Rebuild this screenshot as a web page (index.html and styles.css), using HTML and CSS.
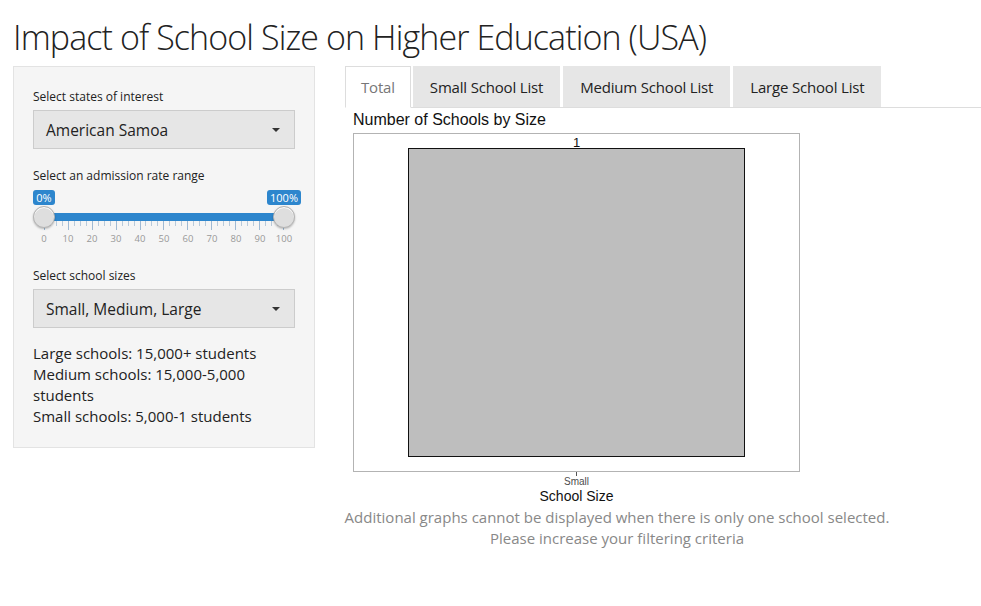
FILE: index.html
```html
<!DOCTYPE html>
<html>
<head>
<meta charset="utf-8">
<link rel="stylesheet" href="styles.css">
</head>
<body>
<h1 class="title">Impact of School Size on Higher Education (USA)</h1>
<div class="layout">
  <aside class="well">
    <label class="lbl">Select states of interest</label>
    <div class="select"><span>American Samoa</span><span class="caret"></span></div>

    <label class="lbl lbl-slider">Select an admission rate range</label>
    <div class="slider">
      <div class="bubbles"><span class="bpos"><span class="bubble">0%</span></span><span class="bpos"><span class="bubble">100%</span></span></div>
      <div class="track-row">
        <span class="handle"></span>
        <div class="track"></div>
        <span class="handle"></span>
      </div>
      <div class="ticks">
        <span class="tk big"></span><span class="tk"></span><span class="tk"></span><span class="tk"></span>
        <span class="tk big"></span><span class="tk"></span><span class="tk"></span><span class="tk"></span>
        <span class="tk big"></span><span class="tk"></span><span class="tk"></span><span class="tk"></span>
        <span class="tk big"></span><span class="tk"></span><span class="tk"></span><span class="tk"></span>
        <span class="tk big"></span><span class="tk"></span><span class="tk"></span><span class="tk"></span>
        <span class="tk big"></span><span class="tk"></span><span class="tk"></span><span class="tk"></span>
        <span class="tk big"></span><span class="tk"></span><span class="tk"></span><span class="tk"></span>
        <span class="tk big"></span><span class="tk"></span><span class="tk"></span><span class="tk"></span>
        <span class="tk big"></span><span class="tk"></span><span class="tk"></span><span class="tk"></span>
        <span class="tk big"></span><span class="tk"></span><span class="tk"></span><span class="tk"></span>
        <span class="tk big"></span>
      </div>
      <div class="nums">
        <span>0</span><span>10</span><span>20</span><span>30</span><span>40</span><span>50</span><span>60</span><span>70</span><span>80</span><span>90</span><span>100</span>
      </div>
    </div>

    <label class="lbl lbl-sizes">Select school sizes</label>
    <div class="select"><span>Small, Medium, Large</span><span class="caret"></span></div>

    <p class="info">Large schools: 15,000+ students<br>Medium schools: 15,000-5,000 students<br>Small schools: 5,000-1 students</p>
  </aside>

  <main class="main">
    <ul class="tabs">
      <li class="tab active">Total</li>
      <li class="tab">Small School List</li>
      <li class="tab">Medium School List</li>
      <li class="tab">Large School List</li>
    </ul>
    <div class="plot">
      <div class="plot-title">Number of Schools by Size</div>
      <div class="panel">
        <div class="bar"><span class="bar-label">1</span></div>
      </div>
      <div class="axis">
        <span class="axis-tick"></span>
        <span class="axis-lbl">Small</span>
        <span class="axis-title">School Size</span>
      </div>
    </div>
    <p class="msg">Additional graphs cannot be displayed when there is only one school selected.<br>Please increase your filtering criteria</p>
  </main>
</div>
</body>
</html>
```
FILE: styles.css
```css
* { box-sizing: border-box; }
html, body { margin: 0; padding: 0; background: #fff; }
body {
  font-family: "Open Sans", "Liberation Sans", sans-serif;
  color: #333;
  font-size: 15px;
  width: 981px;
  height: 606px;
  overflow: hidden;
}
.title {
  margin: 0;
  padding: 14px 0 0 13px;
  font-weight: 300;
  font-size: 34px;
  line-height: 46px;
  color: #222;
  letter-spacing: -0.9px;
}
.layout {
  display: flex;
  align-items: flex-start;
  margin-top: 6px;
  padding-left: 13px;
}
.well {
  width: 302px;
  flex: none;
  background: #f5f5f5;
  border: 1px solid #e3e3e3;
  padding: 21px 19px 20px 19px;
  display: flex;
  flex-direction: column;
}
.lbl {
  display: block;
  font-size: 12px;
  line-height: 18px;
  color: #222;
  margin-bottom: 4px;
}
.select {
  height: 39px;
  background: #e6e6e6;
  border: 1px solid #cccccc;
  display: flex;
  align-items: center;
  justify-content: space-between;
  padding: 0 12px 0 12px;
  font-size: 15.5px;
  color: #222;
}
.caret {
  width: 0; height: 0;
  border-left: 4px solid transparent;
  border-right: 4px solid transparent;
  border-top: 4px solid #333;
  margin-right: 2px;
}
.lbl-slider { margin-top: 18px; margin-bottom: 5px; }
.slider { display: flex; flex-direction: column; }
.bubbles { display: flex; justify-content: space-between; padding: 0 11px; }
.bpos { width: 0; display: flex; justify-content: center; }
.bubble {
  background: #2d86cd;
  color: #fff;
  font-size: 11px;
  line-height: 15px;
  padding: 0 3px;
  border-radius: 3px;
  white-space: nowrap;
}
.track-row {
  display: flex;
  align-items: center;
  height: 24px;
  margin-top: 0px;
}
.handle {
  width: 22px; height: 22px;
  border-radius: 50%;
  background: #dedede;
  border: 1px solid #b5b5b5;
  box-shadow: inset 0 1px 0 #fff, 0 1px 2px rgba(0,0,0,0.25);
  flex: none;
  position: relative;
  z-index: 1;
}
.track {
  flex: 1;
  height: 8px;
  background: #2d86cd;
  margin: 0 -2px;
}
.ticks {
  display: flex;
  justify-content: space-between;
  padding: 0 11px;
  height: 9px;
  align-items: flex-start;
  margin-top: -8px;
}
.tk { width: 1px; height: 5px; background: #b8c9da; }
.tk.big { height: 9px; background: #9fb9d3; }
.nums {
  display: flex;
  justify-content: space-between;
  font-size: 9.5px;
  color: #999;
  line-height: 12px;
  margin-top: 3px;
  padding: 0 11px;
}
.nums span { width: 0; display: flex; justify-content: center; white-space: nowrap; }
.lbl-sizes { margin-top: 22px; margin-bottom: 4px; }
.info {
  margin: 15px 0 0 0;
  font-size: 15px;
  line-height: 21px;
  color: #222;
}
.main {
  margin-left: 30px;
  flex: 1;
  display: flex;
  flex-direction: column;
}
.tabs {
  list-style: none;
  margin: 0;
  padding: 0;
  display: flex;
  gap: 2px;
  border-bottom: 1px solid #dddddd;
  height: 42px;
}
.tab {
  height: 41px;
  padding: 0 17px;
  display: flex;
  align-items: center;
  background: #e6e6e6;
  color: #222;
  font-size: 15px;
  letter-spacing: -0.18px;
}
.tab + .tab { margin-left: 1px; }
.tab.active + .tab { margin-left: 0; }
.tab.active {
  background: #fff;
  border: 1px solid #dddddd;
  border-bottom-color: #fff;
  height: 42px;
  color: #777;
  padding: 0 15px;
}
.plot {
  margin-left: 8px;
  width: 447px;
  display: flex;
  flex-direction: column;
  font-family: "Liberation Sans", Arial, sans-serif;
}
.plot-title {
  font-size: 16px;
  line-height: 20px;
  color: #111;
  margin-top: 2px;
  height: 23px;
}
.panel {
  height: 339px;
  border: 1px solid #b3b3b3;
  padding: 14px 54px 14px 54px;
  display: flex;
}
.bar {
  flex: 1;
  background: #bebebe;
  border: 1px solid #111;
  position: relative;
}
.bar-label {
  position: absolute;
  left: 0; right: 0;
  bottom: 100%;
  text-align: center;
  font-size: 13px;
  line-height: 13px;
  color: #111;
}
.axis {
  display: flex;
  flex-direction: column;
  align-items: center;
}
.axis-tick { width: 1px; height: 4px; background: #555; }
.axis-lbl { font-size: 10px; line-height: 12px; color: #4d4d4d; margin-top: 0; }
.axis-title { font-size: 14px; line-height: 16px; color: #111; margin-top: 0; }
.msg {
  margin: 3px 0 0 -1px;
  width: 546px;
  text-align: center;
  font-size: 15px;
  line-height: 21px;
  color: #888;
  white-space: nowrap;
}
```
